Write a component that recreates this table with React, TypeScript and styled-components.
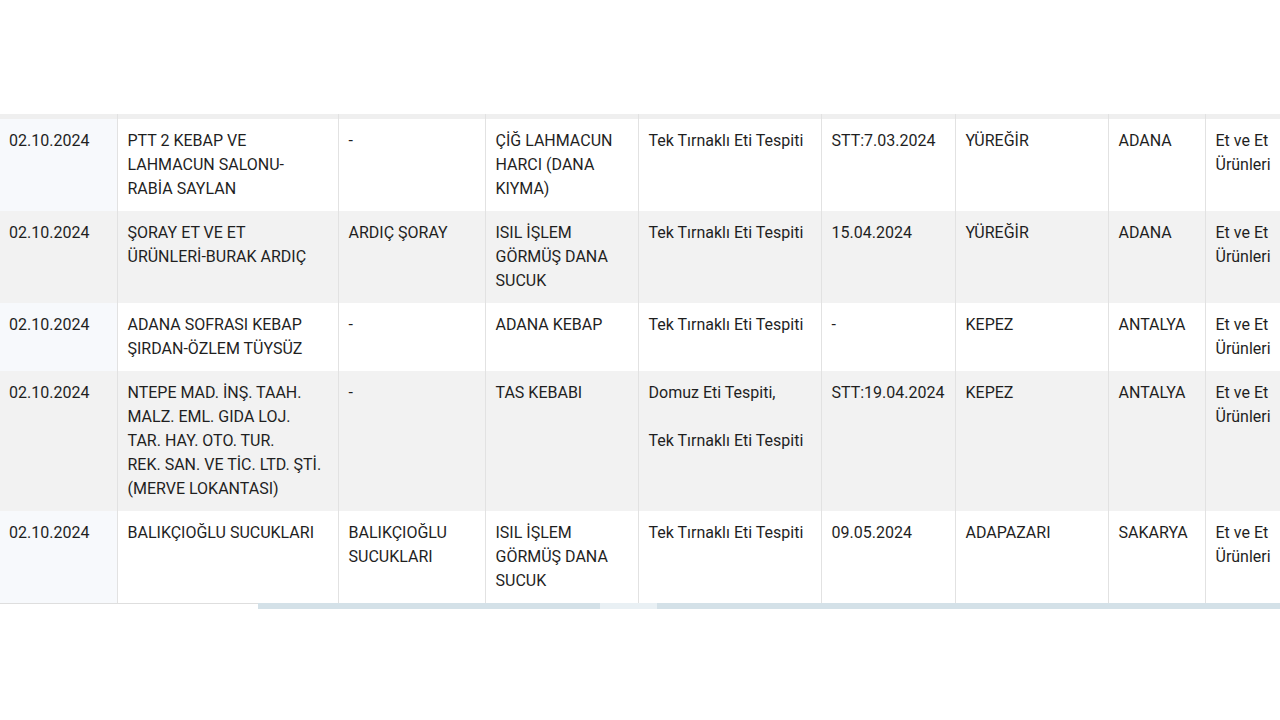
import React from "react";
import styled, { createGlobalStyle } from "styled-components";

const GlobalStyle = createGlobalStyle`
  body {
    margin: 0;
    background: #fff;
    font-family: Roboto, "Noto Sans", Arial, sans-serif;
  }
`;

const Page = styled.div`
  width: 1280px;
  padding-top: 114px;
  overflow: hidden;
`;

const Scroller = styled.div`
  width: 1280px;
  overflow: hidden;
`;

const Table = styled.table`
  width: 1305px;
  table-layout: fixed;
  border-collapse: collapse;
  font-size: 16px;
  line-height: 24px;
  color: #1f1f1f;
`;

const HeadCell = styled.th`
  height: 5px;
  padding: 0;
  background: #efefef;
  border-left: 1px solid #e2e2e2;
  &:first-child {
    border-left: none;
  }
`;

const Row = styled.tr<{ $alt: boolean }>`
  background: ${(p) => (p.$alt ? "#f2f2f2" : "#fff")};
`;

const Cell = styled.td<{ $sticky?: boolean; $alt?: boolean }>`
  padding: 10px;
  vertical-align: top;
  border-left: 1px solid #e2e2e2;
  word-wrap: break-word;
  white-space: normal;
  background: ${(p) => (p.$sticky && !p.$alt ? "#f7f9fc" : "transparent")};
  &:first-child {
    border-left: none;
    padding-left: 9px;
  }
`;

const Gap = styled.span`
  display: block;
  height: 24px;
`;

const ScrollBar = styled.div`
  display: flex;
  height: 6px;
  width: 1280px;
`;

const Segment = styled.div<{ $w: number; $tone: "blank" | "track" | "thumb" }>`
  width: ${(p) => p.$w}px;
  flex: ${(p) => (p.$w ? "none" : "1")};
  border-top: ${(p) => (p.$tone === "blank" ? "1px solid #dedede" : "none")};
  background: ${(p) =>
    p.$tone === "blank" ? "#fff" : p.$tone === "thumb" ? "#e9f0f4" : "#d4e1e8"};
`;

const widths = [117, 221, 147, 153, 183, 134, 153, 97, 100];

type Item = {
  date: string;
  firm: React.ReactNode;
  brand: string;
  product: string;
  finding: React.ReactNode;
  stt: string;
  district: string;
  city: string;
  group: string;
};

const rows: Item[] = [
  {
    date: "02.10.2024",
    firm: "PTT 2 KEBAP VE LAHMACUN SALONU-RABİA SAYLAN",
    brand: "-",
    product: "ÇİĞ LAHMACUN HARCI (DANA KIYMA)",
    finding: "Tek Tırnaklı Eti Tespiti",
    stt: "STT:7.03.2024",
    district: "YÜREĞİR",
    city: "ADANA",
    group: "Et ve Et Ürünleri",
  },
  {
    date: "02.10.2024",
    firm: "ŞORAY ET VE ET ÜRÜNLERİ-BURAK ARDIÇ",
    brand: "ARDIÇ ŞORAY",
    product: "ISIL İŞLEM GÖRMÜŞ DANA SUCUK",
    finding: "Tek Tırnaklı Eti Tespiti",
    stt: "15.04.2024",
    district: "YÜREĞİR",
    city: "ADANA",
    group: "Et ve Et Ürünleri",
  },
  {
    date: "02.10.2024",
    firm: "ADANA SOFRASI KEBAP ŞIRDAN-ÖZLEM TÜYSÜZ",
    brand: "-",
    product: "ADANA KEBAP",
    finding: "Tek Tırnaklı Eti Tespiti",
    stt: "-",
    district: "KEPEZ",
    city: "ANTALYA",
    group: "Et ve Et Ürünleri",
  },
  {
    date: "02.10.2024",
    firm: (
      <>
        NTEPE MAD. İNŞ. TAAH. MALZ. EML. GIDA LOJ. TAR. HAY. OTO. TUR.
        <br />
        REK. SAN. VE TİC. LTD. ŞTİ. (MERVE LOKANTASI)
      </>
    ),
    brand: "-",
    product: "TAS KEBABI",
    finding: (
      <>
        Domuz Eti Tespiti,
        <Gap />
        Tek Tırnaklı Eti Tespiti
      </>
    ),
    stt: "STT:19.04.2024",
    district: "KEPEZ",
    city: "ANTALYA",
    group: "Et ve Et Ürünleri",
  },
  {
    date: "02.10.2024",
    firm: "BALIKÇIOĞLU SUCUKLARI",
    brand: "BALIKÇIOĞLU SUCUKLARI",
    product: "ISIL İŞLEM GÖRMÜŞ DANA SUCUK",
    finding: "Tek Tırnaklı Eti Tespiti",
    stt: "09.05.2024",
    district: "ADAPAZARI",
    city: "SAKARYA",
    group: "Et ve Et Ürünleri",
  },
];

const App = () => {
  return (
    <Page>
      <GlobalStyle />
      <Scroller>
        <Table>
          <colgroup>
            {widths.map((w, i) => (
              <col key={i} style={{ width: w }} />
            ))}
          </colgroup>
          <thead>
            <tr>
              {widths.map((_, i) => (
                <HeadCell key={i} />
              ))}
            </tr>
          </thead>
          <tbody>
            {rows.map((r, i) => {
              const alt = i % 2 === 1;
              return (
                <Row key={i} $alt={alt}>
                  <Cell $sticky $alt={alt}>{r.date}</Cell>
                  <Cell>{r.firm}</Cell>
                  <Cell>{r.brand}</Cell>
                  <Cell>{r.product}</Cell>
                  <Cell>{r.finding}</Cell>
                  <Cell>{r.stt}</Cell>
                  <Cell>{r.district}</Cell>
                  <Cell>{r.city}</Cell>
                  <Cell>{r.group}</Cell>
                </Row>
              );
            })}
          </tbody>
        </Table>
      </Scroller>
      <ScrollBar>
        <Segment $w={258} $tone="blank" />
        <Segment $w={342} $tone="track" />
        <Segment $w={57} $tone="thumb" />
        <Segment $w={0} $tone="track" />
      </ScrollBar>
    </Page>
  );
};

export default App;
